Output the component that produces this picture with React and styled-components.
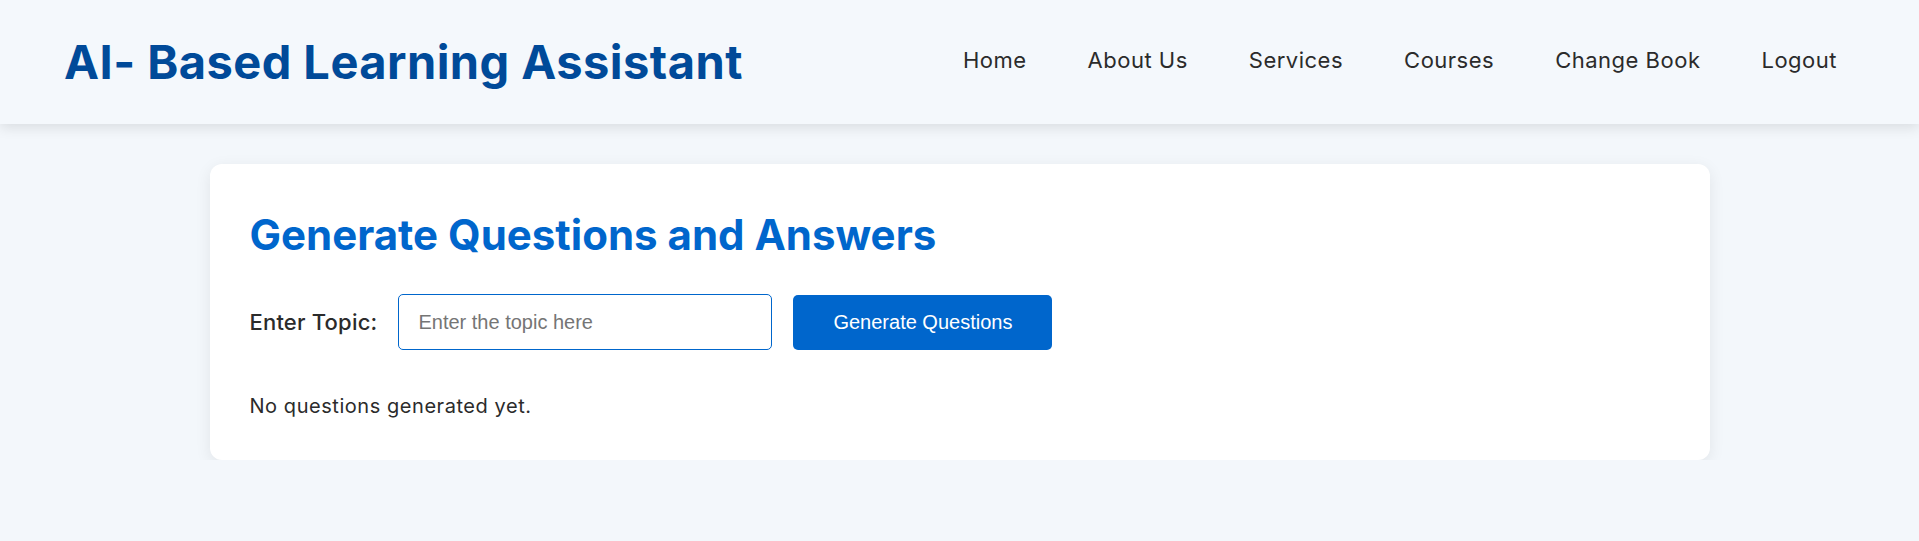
import React from 'react';
import styled, { createGlobalStyle } from 'styled-components';

const GlobalStyle = createGlobalStyle`
  * {
    box-sizing: border-box;
  }
  body {
    margin: 0;
    background: #f3f7fb;
    font-family: 'Inter', 'Noto Sans', sans-serif;
    color: #333;
  }
`;

const Header = styled.header`
  display: flex;
  align-items: center;
  justify-content: space-between;
  height: 124px;
  padding: 0 66px 0 64px;
  background: #f4f8fc;
  box-shadow: 0 4px 12px rgba(0, 0, 0, 0.1);
`;

const Logo = styled.h1`
  margin: 0;
  font-size: 47px;
  font-weight: 700;
  line-height: 60px;
  color: #004a99;
  letter-spacing: 0.45px;
`;

const Nav = styled.nav`
  display: flex;
  align-items: center;
  gap: 29px;
  padding-bottom: 4px;
`;

const NavLink = styled.a`
  padding: 8px 16px;
  font-size: 22px;
  line-height: 30px;
  letter-spacing: 0.5px;
  color: #2b2b2b;
  text-decoration: none;
  cursor: pointer;
`;

const Main = styled.main`
  padding-top: 40px;
`;

const Card = styled.section`
  width: 1500px;
  margin: 0 auto;
  padding: 40px;
  background: #fff;
  border-radius: 12px;
  box-shadow: 0 4px 16px rgba(0, 0, 0, 0.08);
`;

const Heading = styled.h2`
  margin: 0 0 28px;
  font-size: 42px;
  font-weight: 700;
  line-height: 62px;
  color: #0066cc;
`;

const Row = styled.div`
  display: flex;
  align-items: center;
  gap: 21px;
`;

const Label = styled.label`
  font-size: 22px;
  font-weight: 500;
  letter-spacing: 0.2px;
  color: #2b2b2b;
`;

const Input = styled.input`
  width: 374px;
  height: 56px;
  padding: 0 19px;
  border: 1px solid #0066cc;
  border-radius: 5px;
  font-family: 'Liberation Sans', Arial, sans-serif;
  font-size: 20px;
  color: #333;
  outline: none;
  &::placeholder {
    color: #757575;
  }
`;

const Button = styled.button`
  width: 259px;
  height: 55px;
  border: none;
  border-radius: 5px;
  background: #0066cc;
  color: #fff;
  font-family: 'Liberation Sans', Arial, sans-serif;
  font-size: 20px;
  cursor: pointer;
`;

const Empty = styled.p`
  margin: 42px 0 0;
  font-size: 20px;
  line-height: 28px;
  letter-spacing: 0.55px;
  color: #2b2b2b;
`;

const links = ['Home', 'About Us', 'Services', 'Courses', 'Change Book', 'Logout'];

export default function App() {
  return (
    <>
      <GlobalStyle />
      <Header>
        <Logo>AI- Based Learning Assistant</Logo>
        <Nav>
          {links.map((l) => (
            <NavLink key={l}>{l}</NavLink>
          ))}
        </Nav>
      </Header>
      <Main>
        <Card>
          <Heading>Generate Questions and Answers</Heading>
          <Row>
            <Label htmlFor="topic">Enter Topic:</Label>
            <Input id="topic" type="text" placeholder="Enter the topic here" />
            <Button>Generate Questions</Button>
          </Row>
          <Empty>No questions generated yet.</Empty>
        </Card>
      </Main>
    </>
  );
}
